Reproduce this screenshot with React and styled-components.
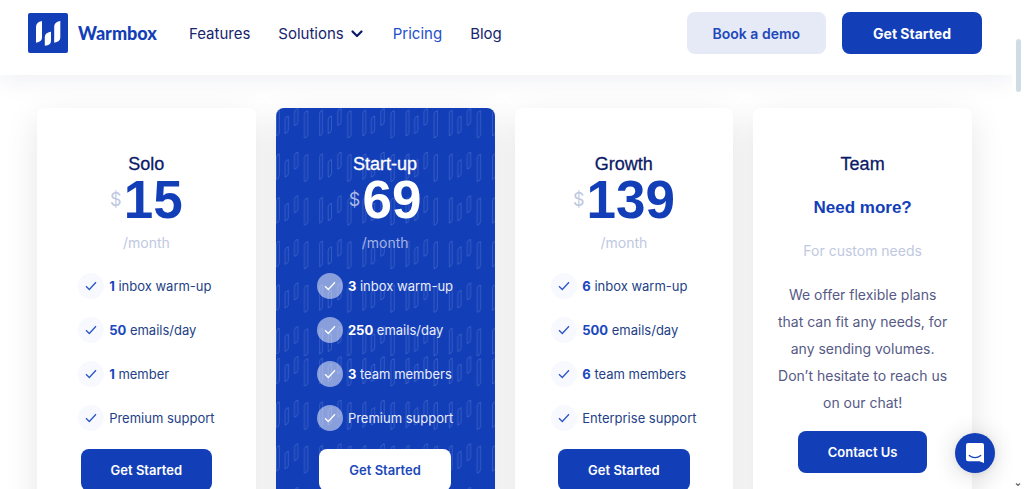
import React from "react";
import styled, { createGlobalStyle, css } from "styled-components";

const blue = "#123eb8";
const navy = "#0b1a66";
const muted = "#c0c8df";

const GlobalStyle = createGlobalStyle`
  * { box-sizing: border-box; }
  body {
    margin: 0;
    background: #fff;
    font-family: Inter, "Liberation Sans", sans-serif;
    color: ${navy};
  }
`;

const Shell = styled.div`
  display: grid;
  grid-template-columns: minmax(0, 1fr) 12px;
  height: 100vh;
  overflow: hidden;
`;

const Page = styled.div`
  position: relative;
  overflow: hidden;
`;

const Header = styled.header`
  display: flex;
  align-items: center;
  padding: 12px 30px 21px 28px;
  background: #fff;
  box-shadow: 0 4px 24px rgba(20, 40, 90, 0.08);
`;

const Brand = styled.a`
  display: flex;
  align-items: center;
  gap: 10px;
  margin-right: 32px;
  color: ${blue};
  font: 900 18px/24px Lato, sans-serif;
  text-decoration: none;
`;

const Nav = styled.nav`
  display: flex;
  flex: 1;
  align-items: center;
  gap: 28px;
`;

const NavLink = styled.a`
  display: flex;
  align-items: center;
  gap: 5px;
  padding-top: 2px;
  color: ${(p) => (p.$active ? "#2350cc" : "#17246e")};
  font-size: 15px;
  line-height: 20px;
  text-decoration: none;
`;

const Actions = styled.div`
  display: flex;
  gap: 16px;
`;

const Button = styled.button`
  height: 42px;
  padding: 0 ${(p) => (p.$narrow ? 26 : p.$large ? 31 : 30)}px;
  border: 0;
  border-radius: 8px;
  font-family: inherit;
  font-weight: ${(p) => (p.$large && !p.$variant ? 700 : 600)};
  font-size: ${(p) => (p.$large ? 14 : 13)}px;
  white-space: nowrap;
  cursor: pointer;
  color: #fff;
  background: ${blue};
  ${(p) => p.$variant === "soft" && css`color: #2148ba; background: #e6eaf6;`}
  ${(p) => p.$variant === "white" && css`color: #2148ba; background: #fff;`}
`;

const Plans = styled.main`
  display: grid;
  grid-template-columns: repeat(4, minmax(0, 1fr));
  gap: 20px;
  padding: 33px 40px 40px 37px;
`;

const Card = styled.section`
  position: relative;
  display: flex;
  flex-direction: column;
  align-items: center;
  padding: 44px 16px 48px;
  border-radius: 8px;
  overflow: hidden;
  color: ${(p) => (p.$featured ? "#fff" : navy)};
  background: ${(p) => (p.$featured ? blue : "#fff")};
`;

const CardShadow = styled.div`
  display: grid;
  border-radius: 8px;
  box-shadow: 0 10px 34px rgba(0, 0, 0, 0.1);
`;

const Backdrop = styled.svg`
  position: absolute;
  inset: 0;
  width: 100%;
  height: 100%;
`;

const Content = styled.div`
  position: relative;
  display: flex;
  flex-direction: column;
  align-items: center;
`;

const PlanName = styled.h2`
  margin: 0;
  font: 400 18px/24px "Liberation Sans", sans-serif;
  -webkit-text-stroke: 0.3px currentColor;
`;

const Price = styled.p`
  display: flex;
  align-items: center;
  gap: 2px;
  margin: 0;
  color: ${(p) => (p.$featured ? "#fff" : blue)};
  font: 700 53px/48px "Liberation Sans", sans-serif;
`;

const Currency = styled.span`
  color: ${(p) => (p.$featured ? "#a9b8e4" : muted)};
  font: 400 18px/24px Inter, sans-serif;
`;

const Note = styled.p`
  margin: ${(p) => (p.$spaced ? 21 : 9)}px 0 20px;
  color: ${(p) => (p.$featured ? "#a3b3e2" : muted)};
  font-size: 14px;
  line-height: 20px;
`;

const Features = styled.ul`
  display: grid;
  gap: 18px;
  margin: 0 0 18px;
  padding: 0;
  list-style: none;
`;

const Feature = styled.li`
  display: flex;
  align-items: center;
  gap: 5px;
  color: ${(p) => (p.$featured ? "#e9edfa" : "#243f86")};
  font-size: 13px;
  line-height: 26px;
  white-space: nowrap;

  b {
    color: ${(p) => (p.$featured ? "#fff" : "#1a47be")};
    font-weight: 700;
  }
`;

const Tick = styled.span`
  display: grid;
  place-items: center;
  width: 26px;
  height: 26px;
  border-radius: 50%;
  color: ${(p) => (p.$featured ? "#fff" : "#2a55cb")};
  background: ${(p) => (p.$featured ? "rgba(255, 255, 255, 0.5)" : "#f7f9fe")};
`;

const Pitch = styled.p`
  margin: 20px 0 0;
  color: ${blue};
  font: 700 17px/24px "Liberation Sans", sans-serif;
`;

const Copy = styled.p`
  margin: 0 0 15px;
  color: #565a85;
  font-size: 14px;
  line-height: 27px;
  text-align: center;
  white-space: nowrap;
`;

const ChatButton = styled.button`
  position: absolute;
  right: 17px;
  bottom: 16px;
  display: grid;
  place-items: center;
  width: 40px;
  height: 40px;
  padding: 0;
  border: 0;
  border-radius: 50%;
  background: ${blue};
  box-shadow: 0 1px 6px rgba(0, 0, 0, 0.06), 0 2px 24px rgba(0, 0, 0, 0.16);
  cursor: pointer;
`;

const Track = styled.div`
  display: flex;
  flex-direction: column;
  align-items: center;
  justify-content: space-between;
  padding: 39px 0 2px;
`;

const Thumb = styled.div`
  width: 5px;
  height: 53px;
  border-radius: 3px;
  background: #d0dce5;
`;

function Logo() {
  return (
    <svg width="40" height="40" viewBox="0 0 40 40" aria-hidden="true">
      <rect width="40" height="40" rx="2" fill={blue} />
      <g fill="#fff">
        <path d="M8 14C8 10.500 10 8.600 14 8v16.500C14 27.500 12 29.200 8 29.700Z" />
        <path d="M16.800 24.500C16.800 21 19 19.200 23 18.700v9C23 30.700 21 32.200 16.800 32.700Z" />
        <path d="M26.200 14C26.200 10.500 28.300 8.600 32.300 8v16.500C32.300 27.500 30.200 29.200 26.200 29.700Z" />
      </g>
    </svg>
  );
}

function Bars({ y }) {
  return (
    <g transform={`translate(0 ${y})`}>
      <path d="M.5 5.500Q.5 2.800 3.300 2.300V24Q3.300 27 .5 28Z" />
      <path d="M9 11.500Q9 9 12.300 8V22Q12.300 24.500 9 25.500Z" />
      <path d="M18.500 4Q18.500 1.500 21.800.500V14Q21.800 16.500 18.500 17.500Z" />
      <path d="M28.500 6Q28.500 3.500 31.800 2.800V26.500Q31.800 29 28.500 30Z" />
    </g>
  );
}

function BarPattern() {
  return (
    <Backdrop aria-hidden="true">
      <defs>
        <pattern id="bars" width="43.2" height="248" patternUnits="userSpaceOnUse">
          <g fill="none" stroke="#fff" strokeOpacity="0.16" strokeWidth="0.9">
            {[0, 1, 2, 3, 4, 5].map((i) => (
              <Bars key={i} y={i * 43.6} />
            ))}
          </g>
        </pattern>
      </defs>
      <rect width="100%" height="100%" fill="url(#bars)" />
    </Backdrop>
  );
}

function Check() {
  return (
    <svg width="12" height="10" viewBox="0 0 12 10" fill="none" aria-hidden="true">
      <path d="M1 5.300 4.300 8.500 11 1.300" stroke="currentColor" strokeWidth="1.300" />
    </svg>
  );
}

const plans = [
  { name: "Solo", price: "15", features: [["1", "inbox warm-up"], ["50", "emails/day"], ["1", "member"], ["", "Premium support"]] },
  { name: "Start-up", price: "69", featured: true, features: [["3", "inbox warm-up"], ["250", "emails/day"], ["3", "team members"], ["", "Premium support"]] },
  { name: "Growth", price: "139", features: [["6", "inbox warm-up"], ["500", "emails/day"], ["6", "team members"], ["", "Enterprise support"]] },
];

function PlanCard({ name, price, featured, features }) {
  return (
    <CardShadow>
      <Card $featured={featured}>
        {featured && <BarPattern />}
        <Content>
          <PlanName>{name}</PlanName>
          <Price $featured={featured}>
            <Currency $featured={featured}>$</Currency>
            {price}
          </Price>
          <Note $featured={featured}>/month</Note>
          <Features>
            {features.map(([count, label]) => (
              <Feature key={label} $featured={featured}>
                <Tick $featured={featured}><Check /></Tick>
                <span>{count && <><b>{count}</b>{" "}</>}{label}</span>
              </Feature>
            ))}
          </Features>
          <Button $variant={featured ? "white" : undefined}>Get Started</Button>
        </Content>
      </Card>
    </CardShadow>
  );
}

export default function App() {
  return (
    <Shell>
      <GlobalStyle />
      <Page>
        <Header>
          <Brand href="#"><Logo />Warmbox</Brand>
          <Nav>
            <NavLink href="#features">Features</NavLink>
            <NavLink href="#solutions">
              Solutions
              <svg width="16" height="16" viewBox="0 0 16 16" fill="none" aria-hidden="true">
                <path d="M3.500 5.500 8 10l4.500-4.500" stroke={navy} strokeWidth="2.200" strokeLinecap="round" strokeLinejoin="round" />
              </svg>
            </NavLink>
            <NavLink href="#pricing" $active>Pricing</NavLink>
            <NavLink href="#blog">Blog</NavLink>
          </Nav>
          <Actions>
            <Button $large $narrow $variant="soft">Book a demo</Button>
            <Button $large>Get Started</Button>
          </Actions>
        </Header>
        <Plans>
          {plans.map((plan) => <PlanCard key={plan.name} {...plan} />)}
          <CardShadow>
            <Card>
              <PlanName>Team</PlanName>
              <Pitch>Need more?</Pitch>
              <Note $spaced>For custom needs</Note>
              <Copy>
                We offer flexible plans<br />
                that can fit any needs, for<br />
                any sending volumes.<br />
                Don’t hesitate to reach us<br />
                on our chat!
              </Copy>
              <Button>Contact Us</Button>
            </Card>
          </CardShadow>
        </Plans>
        <ChatButton aria-label="Open chat">
          <svg width="20" height="22" viewBox="0 0 20 22" fill="none" aria-hidden="true">
            <path d="M3 1h14a2 2 0 0 1 2 2v18l-4.500-1.800H3a2 2 0 0 1-2-2V3a2 2 0 0 1 2-2Z" fill="#fff" />
            <path d="M4.200 13.500c3.500 2.700 8.100 2.700 11.600 0" stroke={blue} strokeWidth="1.200" strokeLinecap="round" />
          </svg>
        </ChatButton>
      </Page>
      <Track aria-hidden="true">
        <Thumb />
        <svg width="6" height="5" viewBox="0 0 6 5" fill="none">
          <path d="M1 1.500 3 3.500 5 1.500" stroke="#666" strokeWidth="1.200" />
        </svg>
      </Track>
    </Shell>
  );
}
